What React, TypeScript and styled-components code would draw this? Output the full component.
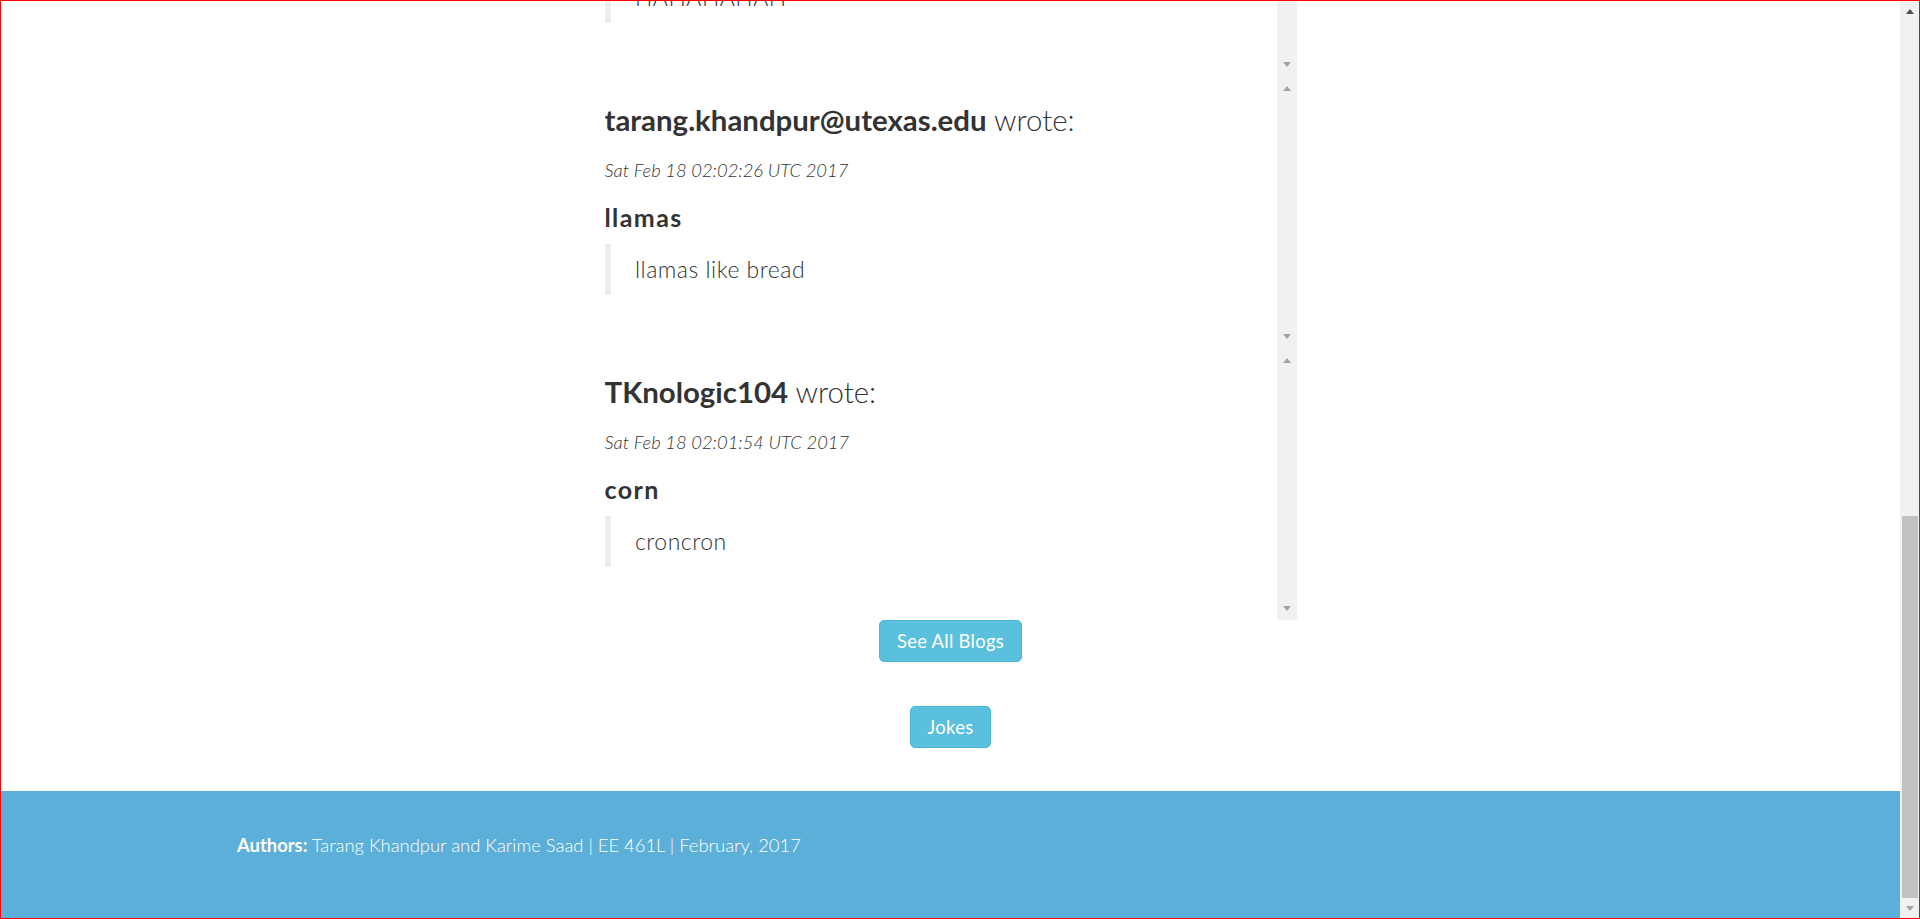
import React from "react";
import styled, { createGlobalStyle } from "styled-components";

interface Post {
  author: string;
  date: string;
  title: string;
  body: string;
}

const posts: Post[] = [
  {
    author: "TKnologic104",
    date: "Sat Feb 18 02:03:12 UTC 2017",
    title: "haha",
    body: "HAHAHAHAH",
  },
  {
    author: "tarang.khandpur@utexas.edu",
    date: "Sat Feb 18 02:02:26 UTC 2017",
    title: "llamas",
    body: "llamas like bread",
  },
  {
    author: "TKnologic104",
    date: "Sat Feb 18 02:01:54 UTC 2017",
    title: "corn",
    body: "croncron",
  },
];

const GlobalStyle = createGlobalStyle`
  html, body {
    margin: 0;
    padding: 0;
    height: 100%;
    overflow: hidden;
    background: #fff;
  }
  body {
    font-family: Lato, "Open Sans", "Liberation Sans", sans-serif;
    color: #333;
  }
  #root {
    height: 100%;
  }
`;

const Frame = styled.div`
  height: 100vh;
  box-sizing: border-box;
  border: 1px solid #ff0000;
  display: flex;
`;

const Main = styled.div`
  flex: 1;
  min-width: 0;
  display: flex;
  flex-direction: column;
`;

const Content = styled.div`
  flex: 1;
  min-height: 0;
  overflow: hidden;
  display: flex;
  flex-direction: column;
  justify-content: flex-end;
  align-items: center;
`;

const PostList = styled.div`
  width: 692px;
  display: flex;
  flex-direction: column;
  flex-shrink: 0;
`;

const PostBox = styled.div`
  height: 272px;
  display: flex;
  flex-shrink: 0;
`;

const PostBody = styled.div`
  flex: 1;
  min-width: 0;
  padding-top: 28px;
  overflow: hidden;
`;

const AuthorLine = styled.h3`
  margin: 0;
  font-size: 29.4px;
  line-height: 32px;
  font-weight: 300;

  strong {
    font-weight: 700;
  }
`;

const DateLine = styled.p`
  margin: 21px 0 0;
  font-size: 18.4px;
  line-height: 26px;
  font-style: italic;
  font-weight: 300;
`;

const PostTitle = styled.h4`
  margin: 21.5px 0 0;
  font-size: 25px;
  line-height: 24px;
  letter-spacing: 1.4px;
  font-weight: 700;
`;

const Quote = styled.blockquote`
  margin: 15.5px 0 0;
  padding: 12.25px 24.5px;
  border-left: 6px solid #eee;
  font-size: 23px;
  line-height: 26px;
  letter-spacing: 0.5px;
  font-weight: 300;
`;

const InnerScrollbar = styled.div`
  width: 20px;
  flex-shrink: 0;
  background: #f1f1f1;
  display: flex;
  flex-direction: column;
  justify-content: space-between;
  align-items: center;
  padding: 10px 0 9px;
  box-sizing: border-box;
`;

const Arrow = styled.span<{ $dir: "up" | "down"; $color?: string }>`
  width: 0;
  height: 0;
  border-left: 4.5px solid transparent;
  border-right: 4.5px solid transparent;
  ${({ $dir, $color = "#a3a3a3" }) =>
    $dir === "up"
      ? `border-bottom: 5px solid ${$color};`
      : `border-top: 5px solid ${$color};`}
`;

const ButtonStack = styled.div`
  display: flex;
  flex-direction: column;
  align-items: center;
  gap: 44px;
  margin-bottom: 43px;
  flex-shrink: 0;
`;

const InfoButton = styled.button`
  box-sizing: border-box;
  height: 42px;
  padding: 0 17px;
  background: #5bc0de;
  border: 1px solid #46b8da;
  border-radius: 5px;
  color: #fff;
  font-family: inherit;
  font-size: 18.4px;
  line-height: 24px;
  letter-spacing: 0.3px;
  font-weight: 400;
  cursor: pointer;

  &:hover {
    background: #31b0d5;
  }
`;

const Footer = styled.footer`
  height: 127px;
  flex-shrink: 0;
  box-sizing: border-box;
  background: #5cafd8;
  padding: 41px 0 0 236px;
  color: #fff;
  font-size: 18.4px;
  line-height: 26px;
  font-weight: 300;

  strong {
    font-weight: 700;
  }
`;

const PageScrollbar = styled.div`
  width: 19px;
  flex-shrink: 0;
  background: #f1f1f1;
  display: flex;
  flex-direction: column;
`;

const ScrollButton = styled.div`
  height: 20px;
  flex-shrink: 0;
  display: flex;
  align-items: center;
  justify-content: center;
`;

const ThumbTrack = styled.div`
  flex: 1;
  display: flex;
  flex-direction: column;
  justify-content: flex-end;
  padding-left: 2px;
`;

const Thumb = styled.div`
  width: 16px;
  height: 382px;
  background: #c1c1c1;
`;

const PostItem: React.FC<{ post: Post }> = ({ post }) => (
  <PostBox>
    <PostBody>
      <AuthorLine>
        <strong>{post.author}</strong> wrote:
      </AuthorLine>
      <DateLine>{post.date}</DateLine>
      <PostTitle>{post.title}</PostTitle>
      <Quote>{post.body}</Quote>
    </PostBody>
    <InnerScrollbar>
      <Arrow $dir="up" />
      <Arrow $dir="down" />
    </InnerScrollbar>
  </PostBox>
);

const App: React.FC = () => {
  return (
    <>
      <GlobalStyle />
      <Frame>
        <Main>
          <Content>
            <PostList>
              {posts.map((post, i) => (
                <PostItem key={i} post={post} />
              ))}
            </PostList>
            <ButtonStack>
              <InfoButton>See All Blogs</InfoButton>
              <InfoButton>Jokes</InfoButton>
            </ButtonStack>
          </Content>
          <Footer>
            <strong>Authors:</strong> Tarang Khandpur and Karime Saad | EE 461L |
            February, 2017
          </Footer>
        </Main>
        <PageScrollbar>
          <ScrollButton>
            <Arrow $dir="up" $color="#505050" />
          </ScrollButton>
          <ThumbTrack>
            <Thumb />
          </ThumbTrack>
          <ScrollButton>
            <Arrow $dir="down" />
          </ScrollButton>
        </PageScrollbar>
      </Frame>
    </>
  );
};

export default App;
